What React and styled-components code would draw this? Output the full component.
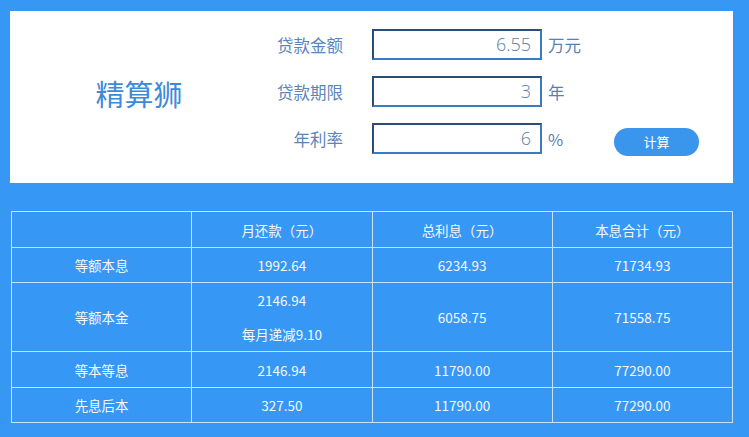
import styled, { createGlobalStyle } from "styled-components";

const GlobalStyle = createGlobalStyle`
  html, body {
    margin: 0;
    padding: 0;
    background: #3797f5;
  }
  body {
    font-family: "Noto Sans CJK SC", "Noto Sans", sans-serif;
  }
`;

const Page = styled.div`
  width: 749px;
  height: 437px;
  padding: 11px 0 0 10px;
  box-sizing: border-box;
  background: #3797f5;
`;

const Column = styled.div`
  width: 723px;
  display: flex;
  flex-direction: column;
  gap: 28px;
`;

const Panel = styled.div`
  background: #fff;
  height: 172px;
  display: flex;
  align-items: flex-start;
`;

const Brand = styled.div`
  align-self: center;
  width: 242px;
  text-align: center;
  padding-left: 16px;
  padding-bottom: 8px;
  box-sizing: border-box;
  font-size: 29px;
  color: #3f8ad8;
`;

const Form = styled.div`
  display: flex;
  flex-direction: column;
  gap: 16px;
  padding-top: 18px;
  margin-left: 14px;
`;

const Row = styled.div`
  display: flex;
  align-items: center;
  height: 31px;
`;

const Label = styled.div`
  width: 77px;
  text-align: right;
  font-size: 16.5px;
  color: #5a86bd;
  margin-right: 29px;
`;

const Input = styled.div`
  width: 170px;
  height: 31px;
  box-sizing: border-box;
  border-style: solid;
  border-width: 2px;
  border-color: #2c4d78 #3a7cc4 #3a7cc4 #2c4d78;
  text-align: right;
  padding-right: 9px;
  font-family: "Open Sans", sans-serif;
  font-weight: 300;
  font-size: 18px;
  line-height: 27px;
  color: #5a7ea6;
`;

const Unit = styled.div`
  margin-left: 6px;
  font-size: 16.5px;
  color: #5a7fb0;
  width: 60px;
`;

const Button = styled.button`
  margin-left: 6px;
  margin-top: 6px;
  width: 85px;
  height: 28px;
  border: 0;
  border-radius: 14px;
  background: #3a95ec;
  color: #fff;
  font-family: inherit;
  font-size: 13px;
`;

const Table = styled.table`
  width: 722px;
  margin-left: 1px;
  border-collapse: collapse;
  border: 1.5px solid #c9e1fb;
  color: #f4f8ff;
  font-size: 13.5px;
  table-layout: fixed;
`;

const Cell = styled.td`
  border: 1.5px solid #c9e1fb;
  text-align: center;
  height: ${(p) => p.$h || 35}px;
  padding: 0;
  vertical-align: middle;
`;

const Line = styled.div`
  line-height: 34px;
`;

const rows = [
  ["等额本息", ["1992.64"], "6234.93", "71734.93", 34],
  ["等额本金", ["2146.94", "每月递减9.10"], "6058.75", "71558.75", 68],
  ["等本等息", ["2146.94"], "11790.00", "77290.00", 35],
  ["先息后本", ["327.50"], "11790.00", "77290.00", 34],
];

export default function App() {
  return (
    <Page>
      <GlobalStyle />
      <Column>
        <Panel>
          <Brand>精算狮</Brand>
          <Form>
            <Row>
              <Label>贷款金额</Label>
              <Input>6.55</Input>
              <Unit>万元</Unit>
            </Row>
            <Row>
              <Label>贷款期限</Label>
              <Input>3</Input>
              <Unit>年</Unit>
            </Row>
            <Row>
              <Label>年利率</Label>
              <Input>6</Input>
              <Unit>%</Unit>
              <Button>计算</Button>
            </Row>
          </Form>
        </Panel>
        <Table>
          <tbody>
            <tr>
              <Cell />
              <Cell>月还款（元）</Cell>
              <Cell>总利息（元）</Cell>
              <Cell>本息合计（元）</Cell>
            </tr>
            {rows.map((r) => (
              <tr key={r[0]}>
                <Cell $h={r[4]}>{r[0]}</Cell>
                <Cell $h={r[4]}>
                  {r[1].map((t) => (
                    <Line key={t}>{t}</Line>
                  ))}
                </Cell>
                <Cell $h={r[4]}>{r[2]}</Cell>
                <Cell $h={r[4]}>{r[3]}</Cell>
              </tr>
            ))}
          </tbody>
        </Table>
      </Column>
    </Page>
  );
}
